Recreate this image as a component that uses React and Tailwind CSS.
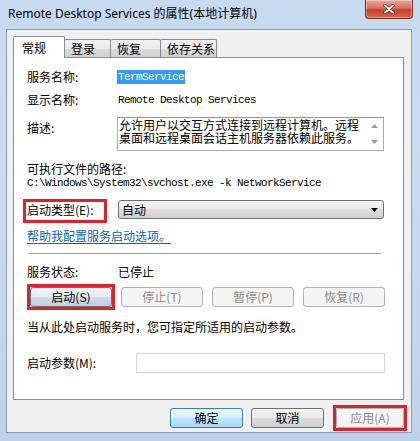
import React from 'react';

const mono = "font-['Liberation_Mono',monospace] text-[11px] tracking-[-0.6px]";

function Tab({ label, selected, width }) {
  if (selected) {
    return (
      <div
        className={`relative z-10 -mb-px flex h-[22px] items-center rounded-t-[2px] border border-b-0 border-[#898c95] bg-white pl-[8px] ${width}`}
      >
        {label}
      </div>
    );
  }
  return (
    <div
      className={`-ml-px flex h-[18px] items-center rounded-t-[2px] border border-b-0 border-[#898c95] bg-[linear-gradient(#f2f2f2,#ebebeb_50%,#dddddd_50%,#cfcfcf)] pl-[6px] ${width}`}
    >
      {label}
    </div>
  );
}

function WinButton({ children, kind = 'normal', className = '' }) {
  const styles = {
    normal: 'border-[#707070] bg-[linear-gradient(#f2f2f2,#ebebeb_50%,#dddddd_50%,#cfcfcf)] text-black',
    hot: 'border-[#707070] bg-[linear-gradient(#f1f5f9,#e2eaf2_50%,#cfdce9_50%,#bccfe1)] text-black',
    primary: 'border-[#3c7fb1] bg-[linear-gradient(#eaf6fd,#d9f0fc_50%,#bee6fd_50%,#a7d9f5)] text-black',
    disabled: 'border-[#adb2b5] bg-[#f4f4f4] text-[#8d8d8d]',
  };
  return (
    <div
      className={`flex h-[20px] items-center justify-center rounded-[3px] border text-[12px] leading-none ${styles[kind]} ${className}`}
    >
      {children}
    </div>
  );
}

function Row({ label, children, className = '' }) {
  return (
    <div className={`flex h-[14px] items-center leading-[14px] ${className}`}>
      <div className="w-[91px] shrink-0">{label}</div>
      {children}
    </div>
  );
}

export default function App() {
  return (
    <div className="flex h-[441px] w-[420px] flex-col bg-[linear-gradient(180deg,#c6daf0,#cadcf0_30%,#bed3eb)] font-['Noto_Sans_CJK_SC','Noto_Sans',sans-serif] text-[12px] text-black">
      {/* title bar */}
      <div className="flex h-[29px] shrink-0 items-start justify-between">
        <div className="pl-[8px] pt-[6px] font-['Noto_Sans','Noto_Sans_CJK_SC',sans-serif] text-[12px] leading-[16px] text-black">
          Remote Desktop Services 的属性(本地计算机)
        </div>
        <div className="mr-[7px] flex h-[19px] w-[48px] items-center justify-center rounded-b-[4px] border border-t-0 border-[#7a2c22] bg-[linear-gradient(#e9a799,#d9705d_45%,#c7402a_55%,#d3654f)] shadow-[inset_0_0_0_1px_rgba(255,255,255,0.35)]">
          <svg width="12" height="10" viewBox="0 0 12 10">
            <path d="M2 1.5 L10 8.5 M10 1.5 L2 8.5" stroke="#5a2018" strokeWidth="3.2" strokeLinecap="round" />
            <path d="M2 1.5 L10 8.5 M10 1.5 L2 8.5" stroke="#ffffff" strokeWidth="2" strokeLinecap="round" />
          </svg>
        </div>
      </div>

      {/* client area */}
      <div className="ml-[6px] mr-[8px] flex h-[404px] shrink-0 flex-col border border-[#8a9bb3] bg-[#f0f0f0] pl-[6px] pr-[7px] pt-[6px]">
        {/* tabs */}
        <div className="flex h-[21px] shrink-0 items-end">
          <Tab label="常规" selected width="w-[52px]" />
          <Tab label="登录" width="w-[47px]" />
          <Tab label="恢复" width="w-[51px]" />
          <Tab label="依存关系" width="w-[57px]" />
        </div>

        {/* tab panel */}
        <div className="flex h-[343px] shrink-0 flex-col border border-[#898c95] bg-white pl-[13px] pr-[18px]">
          <Row label="服务名称:" className="mt-[12px]">
            <div className={`-ml-px bg-[#3399ff] px-px leading-[14px] text-white ${mono}`}>TermService</div>
          </Row>
          <Row label="显示名称:" className="mt-[9px]">
            <div className={mono}>Remote Desktop Services</div>
          </Row>

          <div className="mt-[10px] flex h-[34px] shrink-0">
            <div className="w-[90px] shrink-0 pt-[4px] leading-[14px]">描述:</div>
            <div className="flex w-[267px] border border-[#abadb3] border-t-[#8f939c]">
              <div className="flex-1 whitespace-nowrap pl-px text-[12px] leading-[13px]">
                <div>允许用户以交互方式连接到远程计算机。远程</div>
                <div>桌面和远程桌面会话主机服务器依赖此服务。</div>
              </div>
              <div className="flex w-[17px] flex-col items-center justify-between py-[6px]">
                <svg width="7" height="4" viewBox="0 0 7 4">
                  <path d="M0 4 L3.5 0 L7 4 Z" fill="#9a9a9a" />
                </svg>
                <svg width="7" height="4" viewBox="0 0 7 4">
                  <path d="M0 0 L7 0 L3.5 4 Z" fill="#9a9a9a" />
                </svg>
              </div>
            </div>
          </div>

          <div className="mt-[11px] h-[14px] leading-[14px]">可执行文件的路径:</div>
          <div className={`h-[14px] leading-[14px] ${mono}`}>C:\Windows\System32\svchost.exe -k NetworkService</div>

          <div className="mt-[10px] flex h-[19px] shrink-0 items-center">
            <div className="relative flex h-[19px] w-[91px] shrink-0 items-center">
              启动类型(E):
              <span className="pointer-events-none absolute left-[-4px] top-[-1px] h-[24px] w-[84px] border-[3px] border-[#e0202a]" />
            </div>
            <div className="flex h-[19px] w-[266px] items-center justify-between rounded-[3px] border border-[#707070] bg-[linear-gradient(#f2f2f2,#ebebeb_50%,#dddddd_50%,#cfcfcf)] pl-[3px] pr-[5px]">
              <span>自动</span>
              <svg width="7" height="4" viewBox="0 0 7 4">
                <path d="M0 0 L7 0 L3.5 4 Z" fill="#000000" />
              </svg>
            </div>
          </div>

          <div className="mt-[10px] h-[14px] leading-[14px]">
            <span className="text-[#0066cc] underline underline-offset-2">帮助我配置服务启动选项。</span>
          </div>

          <div className="ml-px mr-[4px] mt-[10px] border-t border-[#a0a0a0]" />

          <Row label="服务状态:" className="mt-[11px]">
            <div>已停止</div>
          </Row>

          <div className="ml-[3px] mt-[8px] grid h-[20px] grid-cols-4 gap-[9px]">
            <div className="relative">
              <WinButton kind="hot">启动(S)</WinButton>
              <span className="pointer-events-none absolute -inset-[3px] border-[3px] border-[#e0202a]" />
            </div>
            <WinButton kind="disabled">停止(T)</WinButton>
            <WinButton kind="disabled">暂停(P)</WinButton>
            <WinButton kind="disabled">恢复(R)</WinButton>
          </div>

          <div className="mt-[13px] h-[14px] leading-[14px]">当从此处启动服务时，您可指定所适用的启动参数。</div>

          <div className="mt-[19px] flex h-[20px] items-center">
            <div className="w-[109px] shrink-0">启动参数(M):</div>
            <div className="h-[20px] flex-1 border border-[#d5d5d5] bg-white" />
          </div>
        </div>

        {/* dialog buttons */}
        <div className="mt-[8px] flex justify-end">
          <WinButton kind="primary" className="w-[73px]">确定</WinButton>
          <WinButton className="ml-[8px] w-[73px]">取消</WinButton>
          <div className="relative ml-[12px] w-[68px]">
            <WinButton kind="disabled">应用(A)</WinButton>
            <span className="pointer-events-none absolute -inset-[3px] border-[3px] border-[#e0202a]" />
          </div>
        </div>
      </div>
    </div>
  );
}
